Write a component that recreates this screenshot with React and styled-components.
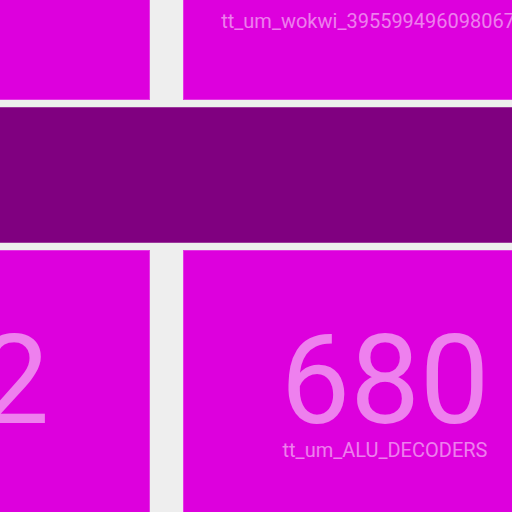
import React from "react";
import styled, { createGlobalStyle } from "styled-components";

const Global = createGlobalStyle`
  html, body { margin: 0; padding: 0; }
  body { background: #eeeeee; font-family: Roboto, "Liberation Sans", sans-serif; overflow: hidden; }
`;

const Viewport = styled.div`
  width: 512px;
  height: 512px;
  overflow: hidden;
  background: #eeeeee;
`;

const Map = styled.div`
  display: grid;
  grid-template-columns: 410px 404px;
  grid-template-rows: 277px 136px 280px;
  column-gap: 33px;
  row-gap: 7px;
  margin-left: -260px;
  margin-top: -177px;
  width: 847px;
`;

const Tile = styled.div`
  box-sizing: border-box;
  background: ${(p) => p.$bg || "#dd00dd"};
  border: 1px solid rgba(255, 255, 255, 0.22);
  grid-column: ${(p) => (p.$span ? "1 / -1" : "auto")};
  display: flex;
  flex-direction: column;
  align-items: center;
  justify-content: center;
  overflow: hidden;
  white-space: nowrap;
  color: rgba(255, 255, 255, 0.5);
`;

const Value = styled.div`
  font-size: 124px;
  line-height: 124px;
`;

const Label = styled.div`
  font-size: 20px;
  line-height: 23px;
  margin-top: -4px;
`;

const top = [
  { value: "448", label: "tt_um_cpu" },
  { value: "720", label: "tt_um_wokwi_395599496098067457" },
];
const bottom = [
  { value: "512", label: "tt_um_cpu" },
  { value: "680", label: "tt_um_ALU_DECODERS" },
];

export default function App() {
  return (
    <Viewport>
      <Global />
      <Map>
        {top.map((t) => (
          <Tile key={t.label}>
            <Value>{t.value}</Value>
            <Label>{t.label}</Label>
          </Tile>
        ))}
        <Tile $span $bg="#800080" />
        {bottom.map((t) => (
          <Tile key={t.label}>
            <Value>{t.value}</Value>
            <Label>{t.label}</Label>
          </Tile>
        ))}
      </Map>
    </Viewport>
  );
}
